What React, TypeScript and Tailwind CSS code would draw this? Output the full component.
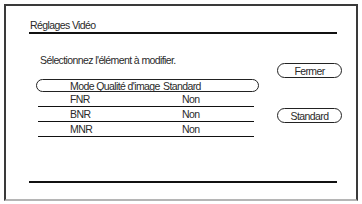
const font = "font-['Liberation_Sans',Arial,sans-serif] tracking-[-0.6px]";

function Row({ label, value }: { label: string; value: string }) {
  return (
    <div className="ml-[2px] flex h-[15px] w-[216px] items-end whitespace-nowrap border-b border-[#111] pb-[1px] text-[10.5px] leading-[12px]">
      <span className="ml-[32px] w-[112px]">{label}</span>
      <span>{value}</span>
    </div>
  );
}

function PillButton({ label }: { label: string }) {
  return (
    <div className="flex h-[15px] w-[65px] items-center justify-center rounded-full border border-[#222] text-[10.5px] leading-[12px]">
      {label}
    </div>
  );
}

export default function App() {
  return (
    <div className={`h-[204px] w-[362px] bg-white pl-[4px] pt-[4px] text-[#2a2a2a] ${font}`}>
      <div className="flex h-[197px] w-[354px] flex-col border-x-2 border-t-2 border-b-2 border-x-[#3a3a3a] border-t-[#3a3a3a] border-b-[#b5b5b5]">
        <div className="ml-[23px] mt-[13px] w-[308px] border-b-2 border-[#111] pb-[1px] pl-[1px] text-[10.5px] leading-[12px]">
          Réglages Vidéo
        </div>

        <div className="flex h-[147px]">
          <div className="ml-[30px] flex flex-col pt-[20px]">
            <p className="whitespace-nowrap pl-[4px] text-[10.5px] leading-[12px]">Sélectionnez l'élément à modifier.</p>
            <div className="mt-[13px] flex h-[13px] w-[223px] items-center whitespace-nowrap rounded-full border border-[#222] text-[10.5px] leading-[12px]">
              <span className="ml-[33px] w-[93px]">Mode Qualité d'image</span>
              <span>Standard</span>
            </div>
            <Row label="FNR" value="Non" />
            <Row label="BNR" value="Non" />
            <Row label="MNR" value="Non" />
          </div>

          <div className="ml-[18px] flex flex-col gap-[30px] pt-[29px]">
            <PillButton label="Fermer" />
            <PillButton label="Standard" />
          </div>
        </div>

        <div className="ml-[23px] h-[2px] w-[308px] bg-[#111]" />
      </div>
    </div>
  );
}
